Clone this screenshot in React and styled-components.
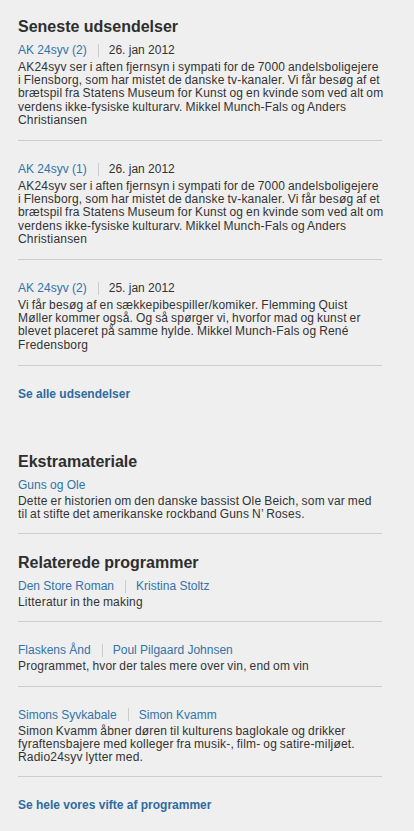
import React from "react";
import styled, { createGlobalStyle } from "styled-components";

const GlobalStyle = createGlobalStyle`
  html, body {
    margin: 0;
    padding: 0;
    background: #efefef;
  }
  body {
    font-family: "Liberation Sans", Arial, Helvetica, sans-serif;
    font-size: 12px;
    color: #333333;
  }
`;

const Page = styled.div`
  box-sizing: border-box;
  width: 414px;
  min-height: 831px;
  padding: 17px 32px 20px 18px;
`;

const Section = styled.section`
  padding-bottom: 19px;
`;

const Heading = styled.h2`
  margin: 0 0 3px;
  font-size: 16px;
  line-height: 20px;
  font-weight: bold;
  color: #2e2e2e;
`;

const Item = styled.article`
  padding: 0 0 ${(p) => (p.$compact ? "12px" : "13px")};
  border-bottom: 1px solid #cdcdcd;
  & + & {
    padding-top: 18px;
  }
`;

const Meta = styled.div`
  display: flex;
  align-items: center;
  height: 20px;
  line-height: 20px;
  white-space: nowrap;
`;

const MetaLink = styled.a`
  color: #3273aa;
  text-decoration: none;
`;

const Divider = styled.span`
  display: inline-block;
  width: 1px;
  height: 13px;
  background: #cccccc;
  margin: 0 10px 0 11px;
`;

const DateText = styled.span`
  color: #333333;
`;

const Body = styled.p`
  margin: ${(p) => (p.$compact ? "0" : "1px")} -1.8px 0 0;
  line-height: 13.2px;
  letter-spacing: 0.2px;
  word-spacing: -0.7px;
  color: #333333;
`;

const MoreLink = styled.a`
  display: block;
  padding: 18px 0 ${(p) => (p.$last ? "0" : "29px")};
  line-height: 20px;
  font-weight: bold;
  color: #2e6b9f;
  text-decoration: none;
`;

const broadcasts = [
  {
    title: "AK 24syv (2)",
    date: "26. jan 2012",
    text:
      "AK24syv ser i aften fjernsyn i sympati for de 7000 andelsboligejere i Flensborg, som har mistet de danske tv-kanaler. Vi får besøg af et brætspil fra Statens Museum for Kunst og en kvinde som ved alt om verdens ikke-fysiske kulturarv. Mikkel Munch-Fals og Anders Christiansen",
  },
  {
    title: "AK 24syv (1)",
    date: "26. jan 2012",
    text:
      "AK24syv ser i aften fjernsyn i sympati for de 7000 andelsboligejere i Flensborg, som har mistet de danske tv-kanaler. Vi får besøg af et brætspil fra Statens Museum for Kunst og en kvinde som ved alt om verdens ikke-fysiske kulturarv. Mikkel Munch-Fals og Anders Christiansen",
  },
  {
    title: "AK 24syv (2)",
    date: "25. jan 2012",
    text:
      "Vi får besøg af en sækkepibespiller/komiker. Flemming Quist Møller kommer også. Og så spørger vi, hvorfor mad og kunst er blevet placeret på samme hylde. Mikkel Munch-Fals og René Fredensborg",
  },
];

const programs = [
  {
    title: "Den Store Roman",
    host: "Kristina Stoltz",
    text: "Litteratur in the making",
  },
  {
    title: "Flaskens Ånd",
    host: "Poul Pilgaard Johnsen",
    text: "Programmet, hvor der tales mere over vin, end om vin",
  },
  {
    title: "Simons Syvkabale",
    host: "Simon Kvamm",
    text:
      "Simon Kvamm åbner døren til kulturens baglokale og drikker fyraftensbajere med kolleger fra musik-, film- og satire-miljøet. Radio24syv lytter med.",
  },
];

export default function App() {
  return (
    <>
      <GlobalStyle />
      <Page>
        <Section>
          <Heading>Seneste udsendelser</Heading>
          {broadcasts.map((b, i) => (
            <Item key={i}>
              <Meta>
                <MetaLink href="#">{b.title}</MetaLink>
                <Divider />
                <DateText>{b.date}</DateText>
              </Meta>
              <Body>{b.text}</Body>
            </Item>
          ))}
          <MoreLink href="#">Se alle udsendelser</MoreLink>
        </Section>

        <Section>
          <Heading>Ekstramateriale</Heading>
          <Item $compact>
            <Meta>
              <MetaLink href="#">Guns og Ole</MetaLink>
            </Meta>
            <Body $compact>
              Dette er historien om den danske bassist Ole Beich, som var med
              til at stifte det amerikanske rockband Guns N’ Roses.
            </Body>
          </Item>
        </Section>

        <Section>
          <Heading>Relaterede programmer</Heading>
          {programs.map((p, i) => (
            <Item key={i} $compact>
              <Meta>
                <MetaLink href="#">{p.title}</MetaLink>
                <Divider />
                <MetaLink href="#">{p.host}</MetaLink>
              </Meta>
              <Body $compact>{p.text}</Body>
            </Item>
          ))}
          <MoreLink href="#" $last>
            Se hele vores vifte af programmer
          </MoreLink>
        </Section>
      </Page>
    </>
  );
}
